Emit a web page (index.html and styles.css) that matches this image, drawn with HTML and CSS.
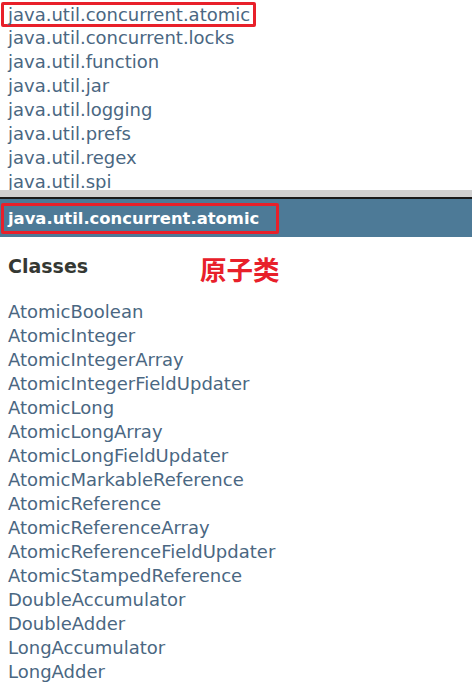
FILE: index.html
```html
<!DOCTYPE html>
<html lang="zh">

<head>
    <meta charset="UTF-8">
    <meta name="viewport" content="width=device-width, initial-scale=1.0">
    <title>java.util.concurrent.atomic</title>
    <link rel="stylesheet" href="styles.css">
</head>

<body>
    <div class="package-frame">
        <ul class="package-list">
            <li class="marked"><a href="#">java.util.concurrent.atomic</a></li>
            <li><a href="#">java.util.concurrent.locks</a></li>
            <li><a href="#">java.util.function</a></li>
            <li><a href="#">java.util.jar</a></li>
            <li><a href="#">java.util.logging</a></li>
            <li><a href="#">java.util.prefs</a></li>
            <li><a href="#">java.util.regex</a></li>
            <li><a href="#">java.util.spi</a></li>
        </ul>
    </div>

    <div class="splitter"></div>

    <div class="class-frame">
        <div class="bar">
            <span class="bar-title">java.util.concurrent.atomic</span>
        </div>

        <div class="heading-row">
            <h2 class="title">Classes</h2>
            <span class="note">原子类</span>
        </div>

        <ul class="class-list">
            <li><a href="#">AtomicBoolean</a></li>
            <li><a href="#">AtomicInteger</a></li>
            <li><a href="#">AtomicIntegerArray</a></li>
            <li><a href="#">AtomicIntegerFieldUpdater</a></li>
            <li><a href="#">AtomicLong</a></li>
            <li><a href="#">AtomicLongArray</a></li>
            <li><a href="#">AtomicLongFieldUpdater</a></li>
            <li><a href="#">AtomicMarkableReference</a></li>
            <li><a href="#">AtomicReference</a></li>
            <li><a href="#">AtomicReferenceArray</a></li>
            <li><a href="#">AtomicReferenceFieldUpdater</a></li>
            <li><a href="#">AtomicStampedReference</a></li>
            <li><a href="#">DoubleAccumulator</a></li>
            <li><a href="#">DoubleAdder</a></li>
            <li><a href="#">LongAccumulator</a></li>
            <li><a href="#">LongAdder</a></li>
        </ul>
    </div>
</body>

</html>
```

FILE: styles.css
```css
* {
    margin: 0;
    padding: 0;
    box-sizing: border-box;
}

body {
    background-color: white;
    font-family: 'DejaVu Sans', Arial, sans-serif;
    width: 472px;
    height: 696px;
    overflow: hidden;
}

a {
    color: #4a6782;
    text-decoration: none;
}

ul {
    list-style: none;
}

.package-frame {
    height: 190px;
    overflow: hidden;
}

.package-list {
    padding: 2px 0 0 8px;
    font-size: 18px;
    line-height: 24px;
}

.package-list .marked {
    height: 24px;
}

.package-list .marked a {
    display: inline-block;
    vertical-align: top;
    margin-left: -7px;
    padding: 0 3px 0 4px;
    border: 3px solid #e8202a;
    border-radius: 2px;
    line-height: 19px;
    height: 25px;
}

.splitter {
    height: 9px;
    background-color: #d0d0d0;
    border-bottom: 2px solid #1a1a1a;
}

.class-frame {
    height: 497px;
    overflow: hidden;
}

.bar {
    display: flex;
    align-items: flex-start;
    background-color: #4d7a97;
    height: 38px;
    padding: 4px 0 0 1px;
}

.bar-title {
    display: flex;
    align-items: center;
    color: white;
    font-weight: bold;
    font-size: 16.4px;
    padding: 0 17px 0 4px;
    border: 3px solid #e8202a;
    border-radius: 2px;
    height: 31px;
}

.heading-row {
    display: flex;
    align-items: center;
    gap: 112px;
    padding: 0 0 5px 8px;
    height: 63px;
}

.title {
    color: #353833;
    font-size: 19px;
    font-weight: bold;
}

.note {
    margin-top: 4px;
    color: #e8202a;
    font-family: 'Noto Sans CJK SC', sans-serif;
    font-weight: bold;
    font-size: 26.5px;
}

.class-list {
    padding-left: 8px;
    font-size: 18px;
    line-height: 24px;
}
```
